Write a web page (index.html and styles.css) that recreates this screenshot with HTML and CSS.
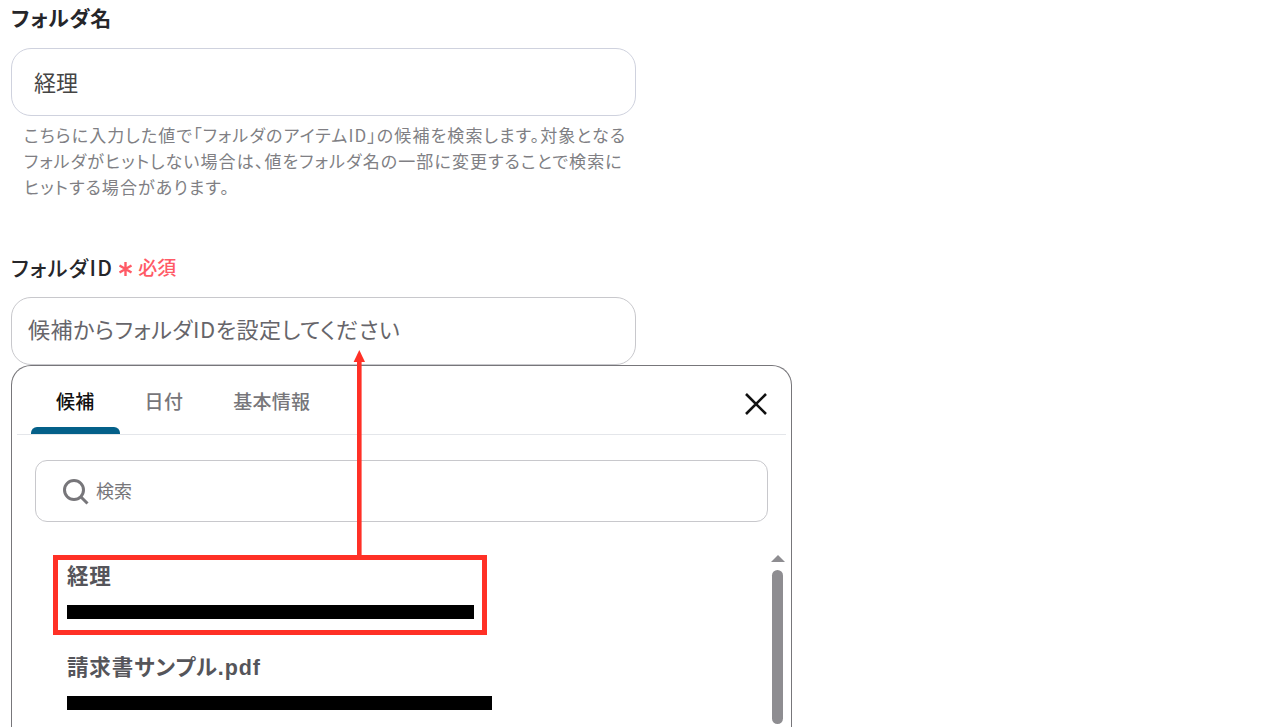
FILE: index.html
```html
<!DOCTYPE html>
<html lang="ja">
<head>
    <meta charset="UTF-8">
    <meta name="viewport" content="width=device-width, initial-scale=1.0">
    <title>フォルダID</title>
    <link rel="stylesheet" href="styles.css">
</head>
<body>
    <div class="form">
        <div class="label name-label">フォルダ名</div>
        <div class="text-input name-input">経理</div>
        <p class="help">こちらに入力した値で「フォルダのアイテムID」の候補を検索します。対象となるフォルダがヒットしない場合は、値をフォルダ名の一部に変更することで検索にヒットする場合があります。</p>

        <div class="label id-label">フォルダID
            <span class="required">
                <svg class="star" width="15" height="16" viewBox="0 0 15 16">
                    <path d="M7.5 1V15M1.5 4.5L13.5 11.5M13.5 4.5L1.5 11.5" stroke="#ff5a66" stroke-width="2.4" fill="none"/>
                </svg>
                必須
            </span>
        </div>
        <div class="text-input id-input">候補からフォルダIDを設定してください</div>

        <div class="popup">
            <div class="tabs">
                <div class="tab active">候補</div>
                <div class="tab">日付</div>
                <div class="tab">基本情報</div>
                <svg class="close" width="22" height="22" viewBox="0 0 22 22">
                    <path d="M1 1L21 21M21 1L1 21" stroke="#111" stroke-width="2.6" fill="none"/>
                </svg>
            </div>
            <div class="search">
                <svg width="26" height="26" viewBox="0 0 26 26">
                    <circle cx="11" cy="11" r="9.5" stroke="#77767a" stroke-width="3" fill="none"/>
                    <path d="M17.5 17.5L24.5 24.5" stroke="#77767a" stroke-width="3" fill="none"/>
                </svg>
                <span>検索</span>
            </div>
            <div class="results">
                <div class="list">
                    <div class="item">
                        <div class="item-name">経理</div>
                        <div class="redacted first"></div>
                    </div>
                    <div class="item">
                        <div class="item-name">請求書サンプル.pdf</div>
                        <div class="redacted second"></div>
                    </div>
                </div>
                <div class="scrollbar">
                    <div class="scroll-up"></div>
                    <div class="scroll-thumb"></div>
                </div>
            </div>
            <div class="highlight"></div>
        </div>
    </div>

    <!-- red annotation arrow -->
    <svg class="arrow" width="14" height="206" viewBox="0 0 14 206">
        <path d="M7.3 0L13 12H1.6Z" fill="#ff3026"/>
        <rect x="5" y="10" width="4.6" height="196" fill="#ff3026"/>
    </svg>
</body>
</html>
```

FILE: styles.css
```css
html, body {
    height: 100%;
}
body {
    margin: 0;
    overflow: hidden;
    background-color: #fff;
    color: #222;
    font-family: "Noto Sans CJK JP", "Noto Sans", sans-serif;
    font-feature-settings: "palt";
}
.form {
    width: 781px;
    margin-left: 11px;
    padding-top: 3px;
}
.label {
    font-size: 21px;
    line-height: 28px;
    font-weight: 500;
    letter-spacing: 1.4px;
    color: #26262a;
}
.name-label {
    font-weight: 700;
    letter-spacing: .6px;
}
.text-input {
    width: 625px;
    height: 68px;
    box-sizing: border-box;
    border: 1px solid #cfd2de;
    border-radius: 20px;
    display: flex;
    align-items: center;
}
.name-input {
    margin-top: 17px;
    padding: 0 0 2px 22px;
    font-size: 22px;
    color: #444;
}
.help {
    width: 604px;
    margin: 6px 0 0 13px;
    font-size: 17px;
    line-height: 26px;
    letter-spacing: 1.1px;
    color: #807f84;
}
.id-label {
    margin-top: 53px;
    display: flex;
    align-items: center;
    gap: 5px;
}
.required {
    display: flex;
    align-items: center;
    gap: 5px;
    font-size: 19px;
    letter-spacing: 0;
    color: #ff5a66;
}
.star {
    margin-top: 4px;
}
.id-input {
    margin-top: 16px;
    padding: 0 0 6px 16px;
    border-color: #c8c8cc;
    font-size: 22px;
    letter-spacing: .55px;
    color: #66656a;
}
.popup {
    position: relative;
    height: 362px;
    box-sizing: border-box;
    border: 1px solid #77767a;
    border-bottom: none;
    border-radius: 20px 20px 0 0;
    padding: 0 5px;
    background-color: #fff;
}
.tabs {
    display: flex;
    height: 68px;
    padding-left: 14px;
    border-bottom: 1px solid #e4e6ea;
    position: relative;
}
.tab {
    padding: 21px 25px 0;
    font-size: 19px;
    line-height: 28px;
    font-weight: 500;
    letter-spacing: .3px;
    color: #77767a;
}
.tab.active {
    position: relative;
    color: #111;
}
.tab.active::after {
    content: "";
    position: absolute;
    left: 0;
    right: 0;
    bottom: 0;
    height: 7px;
    background-color: #046089;
    border-radius: 6px 6px 0 0;
}
.close {
    position: absolute;
    right: 19px;
    top: 27px;
}
.search {
    margin: 25px 18px 0 18px;
    height: 62px;
    box-sizing: border-box;
    border: 1px solid #c8c8cc;
    border-radius: 12px;
    padding: 0 0 2px 27px;
    display: flex;
    align-items: center;
    gap: 7px;
    font-size: 18px;
    color: #77767a;
}
.search svg {
    margin-top: 4px;
}
.results {
    display: flex;
    justify-content: space-between;
    margin-top: 33px;
}
.list {
    padding-left: 50px;
}
.item {
    height: 91px;
}
.item-name {
    font-family: "Liberation Sans", "Noto Sans CJK JP", sans-serif;
    font-size: 21.5px;
    line-height: 44px;
    font-weight: 700;
    letter-spacing: .85px;
    color: #55555a;
}
.redacted {
    height: 14px;
    margin-top: 6px;
    background-color: #000;
}
.first {
    width: 407px;
}
.second {
    width: 425px;
}
.scrollbar {
    margin-right: 2px;
    width: 13px;
    display: flex;
    flex-direction: column;
    align-items: center;
    gap: 8px;
}
.scroll-up {
    width: 0;
    height: 0;
    border-left: 7px solid transparent;
    border-right: 7px solid transparent;
    border-bottom: 7px solid #8e8d91;
}
.scroll-thumb {
    width: 11px;
    height: 154px;
    border-radius: 6px;
    background-color: #8e8d91;
}
.highlight {
    position: absolute;
    left: 41px;
    top: 189px;
    width: 434px;
    height: 80px;
    box-sizing: border-box;
    border: 5px solid #ff3026;
}
.arrow {
    position: absolute;
    left: 352px;
    top: 350px;
}
```
